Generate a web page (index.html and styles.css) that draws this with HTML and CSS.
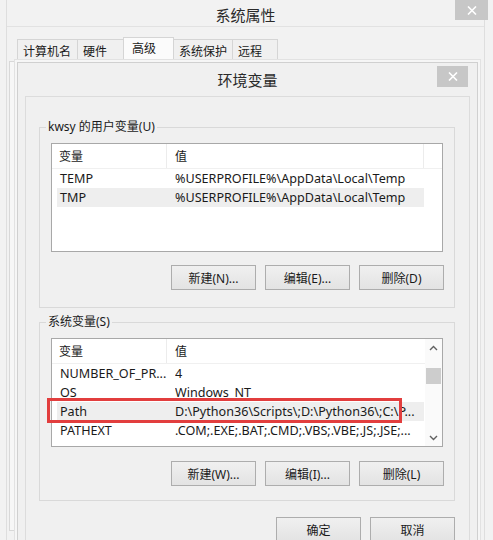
FILE: index.html
```html
<!DOCTYPE html>
<html lang="zh-CN">
<head>
<meta charset="utf-8">
<title>环境变量</title>
<link rel="stylesheet" href="styles.css">
</head>
<body>
<div class="screen">
  <div class="win">
    <div class="win-title">
      <span class="title-spacer"></span>
      <span class="title-text">系统属性</span>
      <span class="title-end">
        <span class="close close-outer">
          <svg width="10" height="9" viewBox="0 0 10 9"><path d="M1 0.5 L9 8.5 M9 0.5 L1 8.5" stroke="#fff" stroke-width="1.6"/></svg>
        </span>
      </span>
    </div>
    <div class="win-body">
      <div class="tabs">
        <div class="tab">计算机名</div>
        <div class="tab">硬件</div>
        <div class="tab tab-active">高级</div>
        <div class="tab">系统保护</div>
        <div class="tab">远程</div>
      </div>
      <div class="tabpanel"></div>
    </div>
  </div>

  <div class="dlg">
    <div class="dlg-title">
      <span class="title-spacer"></span>
      <span class="title-text">环境变量</span>
      <span class="title-end">
        <span class="close close-inner">
          <svg width="10" height="9" viewBox="0 0 10 9"><path d="M1 0.5 L9 8.5 M9 0.5 L1 8.5" stroke="#fff" stroke-width="1.6"/></svg>
        </span>
      </span>
    </div>
    <div class="dlg-client">
      <fieldset class="group group-user">
        <legend>kwsy 的用户变量(U)</legend>
        <div class="list">
          <div class="list-head">
            <div class="hcell hcell-name">变量</div>
            <div class="hcell hcell-val">值</div>
            <div class="hcell hcell-rest"></div>
          </div>
          <div class="row"><span class="c-name">TEMP</span><span class="c-val">%USERPROFILE%\AppData\Local\Temp</span></div>
          <div class="row row-sel"><span class="c-name">TMP</span><span class="c-val">%USERPROFILE%\AppData\Local\Temp</span></div>
        </div>
        <div class="btns">
          <button class="btn">新建(N)...</button>
          <button class="btn">编辑(E)...</button>
          <button class="btn">删除(D)</button>
        </div>
      </fieldset>

      <fieldset class="group group-sys">
        <legend>系统变量(S)</legend>
        <div class="list list-scroll">
          <div class="list-main">
            <div class="list-head">
              <div class="hcell hcell-name">变量</div>
              <div class="hcell hcell-val">值</div>
            </div>
            <div class="row"><span class="c-name">NUMBER_OF_PR...</span><span class="c-val">4</span></div>
            <div class="row"><span class="c-name">OS</span><span class="c-val">Windows_NT</span></div>
            <div class="row row-sel"><span class="c-name">Path</span><span class="c-val">D:\Python36\Scripts\;D:\Python36\;C:\P...</span></div>
            <div class="row"><span class="c-name">PATHEXT</span><span class="c-val">.COM;.EXE;.BAT;.CMD;.VBS;.VBE;.JS;.JSE;...</span></div>
          </div>
          <div class="vscroll">
            <div class="arrow">
              <svg width="9" height="6" viewBox="0 0 9 6"><path d="M1 5 L4.5 1.5 L8 5" fill="none" stroke="#606060" stroke-width="1.4"/></svg>
            </div>
            <div class="track"><div class="thumb"></div></div>
            <div class="arrow">
              <svg width="9" height="6" viewBox="0 0 9 6"><path d="M1 1 L4.5 4.5 L8 1" fill="none" stroke="#606060" stroke-width="1.4"/></svg>
            </div>
          </div>
          <div class="mark"></div>
        </div>
        <div class="btns btns-sys">
          <button class="btn">新建(W)...</button>
          <button class="btn">编辑(I)...</button>
          <button class="btn">删除(L)</button>
        </div>
      </fieldset>

      <div class="btns btns-dlg">
        <button class="btn">确定</button>
        <button class="btn">取消</button>
      </div>
    </div>
  </div>
</div>
</body>
</html>
```

FILE: styles.css
```css
* { box-sizing: border-box; }
html, body { margin: 0; padding: 0; }
body {
  font-family: "Noto Sans", "Noto Sans CJK SC", sans-serif;
  font-size: 12px;
  color: #1a1a1a;
  background: #f0f0f0;
}
.screen {
  position: relative;
  width: 493px;
  height: 540px;
  overflow: hidden;
  background: #f2f2f2;
}

/* outer window */
.win {
  height: 540px;
  margin: 0 8px 0 6px;
  border-left: 1px solid #dedede;
  border-right: 1px solid #dedede;
}
.win-title {
  display: grid;
  grid-template-columns: 1fr auto 1fr;
  align-items: start;
  height: 27px;
  border-bottom: 1px solid #e2e2e2;
}
.title-text {
  font-size: 15px;
  line-height: 18px;
  padding-top: 6px;
  color: #2a2a2a;
  font-family: "Noto Sans CJK SC", sans-serif;
}
.title-end { display: flex; justify-content: flex-end; }
.close {
  display: flex;
  align-items: center;
  justify-content: center;
  background: #c7c7c7;
}
.close-outer { width: 33px; height: 20px; margin-right: -4px; }
.close-inner { width: 31px; height: 21px; margin-right: 9px; margin-top: 3px; }

.win-body { padding: 10px 3px 0 2px; }
.tabs {
  display: flex;
  align-items: flex-end;
  height: 24px;
  padding-left: 8px;
}
.tab {
  height: 22px;
  padding: 0 5px;
  line-height: 21px;
  border: 1px solid #d5d5d5;
  border-bottom: none;
  background: #f0f0f0;
  margin-right: -1px;
  font-family: "Noto Sans CJK SC", sans-serif;
}
.tab:nth-child(1) { width: 61px; }
.tab:nth-child(2) { width: 47px; }
.tab:nth-child(3) { width: 51px; }
.tab:nth-child(4) { width: 60px; }
.tab:nth-child(5) { width: 46px; }
.tab-active {
  height: 24px;
  background: #fbfbfb;
  padding-left: 8px;
  line-height: 20px;
}
.tabpanel {
  height: 470px;
  border: 1px solid #d8d8d8;
  background: #f7f7f7;
}

/* inner dialog (window on top) */
.dlg {
  position: absolute;
  left: 17px;
  top: 62px;
  width: 461px;
  height: 490px;
  border: 1px solid #d0d0d0;
  background: #f0f0f0;
  box-shadow: 0 0 0 2px #f6f6f6, 0 0 0 3px #e2e2e2;
}
.dlg-title {
  display: grid;
  grid-template-columns: 1fr auto 1fr;
  align-items: start;
  height: 33px;
}
.dlg-title .title-text { padding-top: 8px; }
.dlg-client {
  margin: 0 7px;
  height: 460px;
  border: 1px solid #dcdcdc;
  border-bottom: none;
  background: #f0f0f0;
  padding: 22px 14px 0 13px;
}

/* group boxes */
.group {
  margin: 0;
  padding: 0 11px 17px 11px;
  border: 1px solid #d9d9d9;
  min-width: 0;
}
.group legend {
  padding: 0 2px;
  margin-left: -5px;
  line-height: 16px;
  font-family: "Noto Sans", "Noto Sans CJK SC", sans-serif;
}
.group-sys { margin-top: 6px; padding-bottom: 14px; }

/* list views */
.list {
  position: relative;
  margin-top: 8px;
  height: 109px;
  border: 1px solid #a8a8a8;
  background: #fff;
}
.list-head {
  display: flex;
  height: 25px;
  border-bottom: 1px solid #f0f0f0;
}
.hcell {
  line-height: 24px;
  font-family: "Noto Sans CJK SC", sans-serif;
}
.hcell-name { width: 115px; padding-left: 7px; border-right: 1px solid #ececec; }
.hcell-val { width: 257px; padding-left: 8px; border-right: 1px solid #ececec; }
.hcell-rest { flex: 1; }
.row {
  display: flex;
  height: 19px;
  line-height: 19px;
  margin-left: 5px;
  width: 367px;
  white-space: nowrap;
  font-size: 12.6px;
}
.row-sel { background: #eeeeee; }
.c-name { width: 118px; padding-left: 3px; overflow: hidden; }
.c-val { flex: 1; overflow: hidden; }

.list-scroll { display: flex; }
.list-main { flex: 1; min-width: 0; }
.list-scroll .list-head { width: 373px; }
.list-scroll .hcell-val { flex: 1; border-right: none; }
.vscroll {
  width: 17px;
  display: flex;
  flex-direction: column;
  background: #fafafa;
}
.arrow {
  height: 17px;
  display: flex;
  align-items: center;
  justify-content: center;
}
.track { flex: 1; padding: 12px 1px 0 1px; }
.thumb { height: 16px; background: #cdcdcd; }

/* annotation */
.mark {
  position: absolute;
  left: -5px;
  top: 59px;
  width: 355px;
  height: 25px;
  border: 3px solid #e23e3e;
  pointer-events: none;
}

/* buttons */
.btns {
  display: flex;
  justify-content: flex-end;
  gap: 9px;
  margin-top: 13px;
  margin-right: -1px;
}
.btns-sys { margin-top: 14px; }
.btns-dlg { margin-top: 16px; margin-right: 0; }
.btn {
  width: 85px;
  height: 25px;
  padding: 0;
  font: inherit;
  font-family: "Noto Sans", "Noto Sans CJK SC", sans-serif;
  color: #1a1a1a;
  border: 1px solid #adadad;
  background: linear-gradient(#f0f0f0, #e3e3e3);
  border-radius: 0;
}
```
